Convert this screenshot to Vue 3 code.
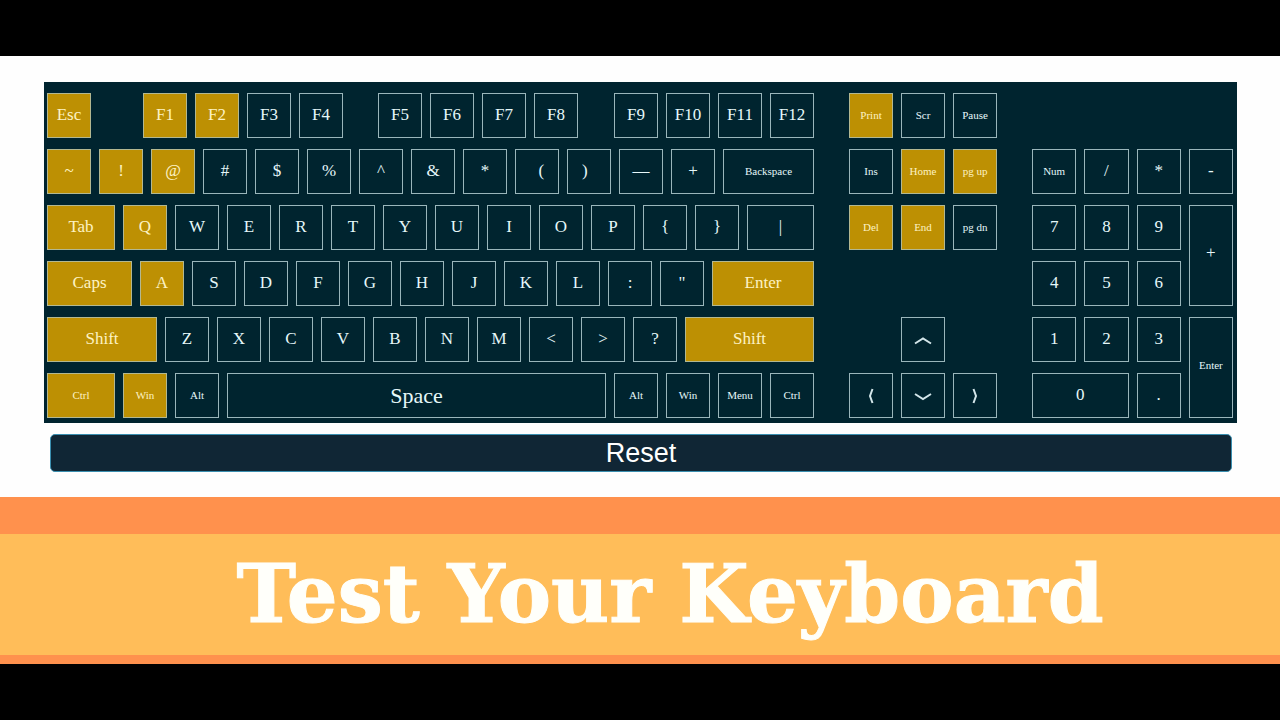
<script setup>
import { reactive } from 'vue'

let nextId = 0
const key = (label, width = 44, size = 'md', on = false) => ({ id: nextId++, label, width, size, on })
const lit = (label, width = 44, size = 'md') => key(label, width, size, true)
const gap = (width) => ({ id: nextId++, width, spacer: true })
const keys = (text) => text.split(' ').map((label) => key(label))

const mainRows = reactive([
  [lit('Esc'), gap(36), lit('F1'), lit('F2'), key('F3'), key('F4'), gap(19), ...keys('F5 F6 F7 F8'), gap(20), ...keys('F9 F10 F11 F12')],
  [lit('~'), lit('!'), lit('@'), ...keys('# $ % ^ & *'), key('\u00a0\u00a0('), key(')\u00a0\u00a0'), ...keys('— +'), key('Backspace', 91, 'sm')],
  [lit('Tab', 68), lit('Q'), ...keys('W E R T Y U I O P { }'), key('|', 67)],
  [lit('Caps', 85), lit('A'), ...keys('S D F G H J K L : "'), lit('Enter', 102)],
  [lit('Shift', 110), ...keys('Z X C V B N M < > ?'), lit('Shift', 129)],
  [lit('Ctrl', 68, 'sm'), lit('Win', 44, 'sm'), key('Alt', 44, 'sm'), key('Space', 379, 'lg'), key('Alt', 44, 'sm'), key('Win', 44, 'sm'), key('Menu', 44, 'sm'), key('Ctrl', 44, 'sm')],
])

const arrow = (name, icon) => ({ ...key(name), icon })

const navRows = reactive([
  [lit('Print', 44, 'sm'), key('Scr', 44, 'sm'), key('Pause', 44, 'sm')],
  [key('Ins', 44, 'sm'), lit('Home', 44, 'sm'), lit('pg up', 44, 'sm')],
  [lit('Del', 44, 'sm'), lit('End', 44, 'sm'), key('pg dn', 44, 'sm')],
  [gap(44)],
  [gap(44), arrow('Up', 'M3 15.5 L11 10.5 L19 15.5'), gap(44)],
  [arrow('Left', 'M12.5 5 L10 12 L12.5 19'), arrow('Down', 'M3 10 L11 15 L19 10'), arrow('Right', 'M9.5 5 L12 12 L9.5 19')],
])

const padKeys = reactive([
  key('Num', 44, 'sm'), key('/'), key('*'), key('-'),
  key('7'), key('8'), key('9'), { ...key('+'), span: 'tall' },
  key('4'), key('5'), key('6'),
  key('1'), key('2'), key('3'), { ...key('Enter', 44, 'sm'), span: 'tall' },
  { ...key('0'), span: 'wide' }, key('.'),
])

const share = (width) => ({ flex: `${width} 1 ${width}px` })

function reset() {
  for (const k of [...mainRows.flat(), ...navRows.flat(), ...padKeys]) k.on = false
}
</script>

<template>
  <div class="page">
    <main class="tester">
      <section class="keyboard" aria-label="Keyboard">
        <div
          v-for="(block, b) in [mainRows, navRows]"
          :key="b"
          :class="['block', b === 0 ? 'block-main' : 'block-nav']"
        >
          <div v-for="(row, r) in block" :key="r" class="row">
            <template v-for="k in row" :key="k.id">
              <span v-if="k.spacer" class="spacer" :style="share(k.width)"></span>
              <button
                v-else
                type="button"
                :class="['key', k.size, { on: k.on }]"
                :style="share(k.width)"
                :aria-label="k.icon ? k.label : undefined"
                @click="k.on = true"
              >
                <svg v-if="k.icon" viewBox="0 0 22 22" width="22" height="22" aria-hidden="true">
                  <path :d="k.icon" />
                </svg>
                <template v-else>{{ k.label }}</template>
              </button>
            </template>
          </div>
        </div>
        <div class="block-pad">
          <button
            v-for="k in padKeys"
            :key="k.id"
            type="button"
            :class="['key', k.size, k.span, { on: k.on }]"
            @click="k.on = true"
          >{{ k.label }}</button>
        </div>
      </section>
      <button type="button" class="reset" @click="reset">Reset</button>
    </main>
    <header class="banner">
      <h1>Test Your Keyboard</h1>
    </header>
  </div>
</template>

<style>
body {
  background: #000;
}
</style>

<style scoped>
.page {
  padding: 56px 0;
  background: #000;
}

.tester {
  padding: 26px 43px 25px 44px;
  background: #fefefe;
}

.keyboard {
  display: flex;
  gap: 35px;
  padding: 11px 4px 5px 3px;
  background: #00242f;
}

.block {
  display: flex;
  flex-direction: column;
  gap: 11px;
  min-width: 0;
}

.block-main {
  flex: 767 1 0;
}

.block-nav {
  flex: 148 1 0;
}

.block-pad {
  display: grid;
  flex: 201 1 0;
  grid-template-columns: repeat(4, 1fr);
  grid-auto-rows: 45px;
  gap: 11px 8px;
  min-width: 0;
  padding-top: 56px;
}

.row {
  display: flex;
  gap: 8px;
  height: 45px;
}

.key {
  display: flex;
  align-items: center;
  justify-content: center;
  box-sizing: border-box;
  min-width: 0;
  margin: 0;
  padding: 0 0 2px;
  border: 1px solid #9ab6bb;
  border-radius: 0;
  background: transparent;
  color: #e6f8fa;
  font-family: "Liberation Serif", "Times New Roman", serif;
  font-size: 17px;
  line-height: 20px;
  white-space: nowrap;
  cursor: pointer;
}

.key.sm {
  font-size: 11px;
}

.key.lg {
  padding-bottom: 0;
  font-size: 22px;
}

.key.on {
  border-color: #b3b891;
  background: #bd9003;
  color: #fdf3c4;
}

.key.tall {
  grid-row: span 2;
  padding-bottom: 6px;
}

.key.wide {
  grid-column: span 2;
}

.key svg {
  fill: none;
  stroke: #d3e6ea;
  stroke-width: 2;
}

.reset {
  display: block;
  box-sizing: border-box;
  width: calc(100% - 11px);
  margin: 11px 5px 0 6px;
  padding: 0;
  border: 1px solid #3a8fb0;
  border-radius: 5px;
  background: #102635;
  color: #fff;
  font-family: "Liberation Sans", Arial, sans-serif;
  font-size: 27px;
  line-height: 36px;
  cursor: pointer;
}

.banner {
  padding: 37px 0 9px;
  background: #ff914d;
}

.banner h1 {
  margin: 0;
  padding-left: 60px;
  background: #ffbd59;
  color: #fffffa;
  font-family: "DejaVu Serif", serif;
  font-size: 80px;
  font-weight: 700;
  line-height: 121px;
  text-align: center;
  -webkit-text-stroke: 1px #fffffa;
}
</style>
